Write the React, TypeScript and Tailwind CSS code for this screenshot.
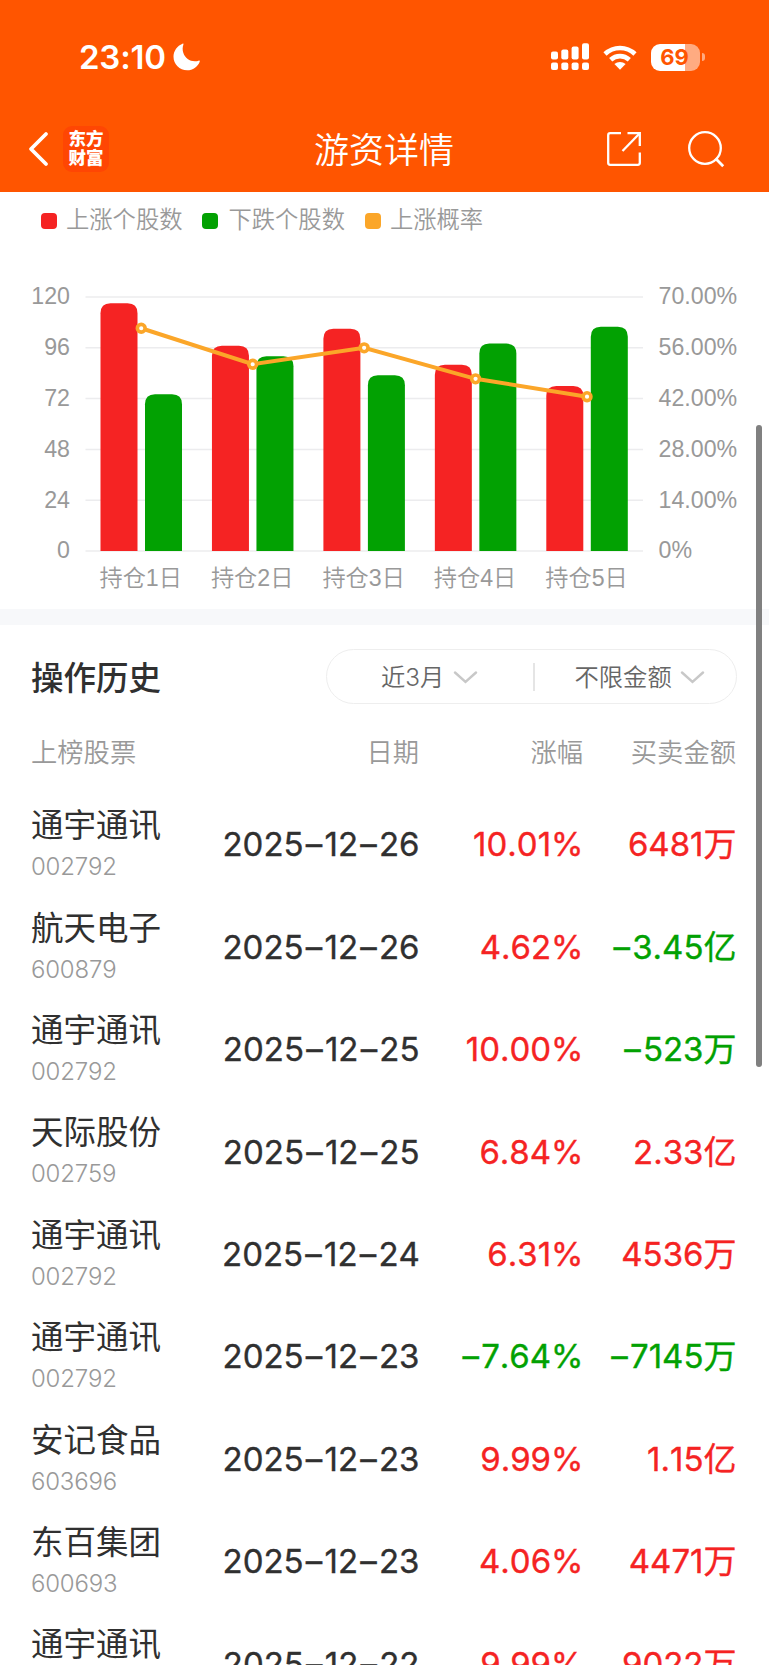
import React from 'react';

interface DayStat {
    label: string;
    up: number;
    down: number;
}

interface TradeRecord {
    name: string;
    code: string;
    date: string;
    change: string;
    amount: string;
}

const stats: DayStat[] = [
    { label: '持仓1日', up: 117, down: 74 },
    { label: '持仓2日', up: 97, down: 92 },
    { label: '持仓3日', up: 105, down: 83 },
    { label: '持仓4日', up: 88, down: 98 },
    { label: '持仓5日', up: 78, down: 106 },
];

const records: TradeRecord[] = [
    { name: '通宇通讯', code: '002792', date: '2025–12–26', change: '10.01%', amount: '6481万' },
    { name: '航天电子', code: '600879', date: '2025–12–26', change: '4.62%', amount: '–3.45亿' },
    { name: '通宇通讯', code: '002792', date: '2025–12–25', change: '10.00%', amount: '–523万' },
    { name: '天际股份', code: '002759', date: '2025–12–25', change: '6.84%', amount: '2.33亿' },
    { name: '通宇通讯', code: '002792', date: '2025–12–24', change: '6.31%', amount: '4536万' },
    { name: '通宇通讯', code: '002792', date: '2025–12–23', change: '–7.64%', amount: '–7145万' },
    { name: '安记食品', code: '603696', date: '2025–12–23', change: '9.99%', amount: '1.15亿' },
    { name: '东百集团', code: '600693', date: '2025–12–23', change: '4.06%', amount: '4471万' },
    { name: '通宇通讯', code: '002792', date: '2025–12–22', change: '9.99%', amount: '9022万' },
];

const valueColor = (value: string) => (value.startsWith('–') ? 'text-[#02a102]' : 'text-[#f52323]');

const StatusBar: React.FC = () => (
    <div className="flex h-[108px] items-start justify-between pl-[79px] pr-[64px] pt-[37px] text-white">
        <div className="flex items-center gap-[7px]">
            <span className="text-[33px] font-semibold leading-[40px] tracking-[-0.2px]">23:10</span>
            <svg className="h-[28px] w-[27px]" viewBox="0 0 27 28" fill="currentColor">
                <path d="M9.500.7C10.200.4 10.700.8 10.400 1.500C9.500 4 9.400 7 10.300 9.800C12 15.300 16.800 18.400 22 18.300C23.300 18.300 24.500 18.100 25.600 17.700C26.400 17.400 27 18 26.700 18.700C24.600 24 19.800 27.300 14.200 27.300C6.600 27.300.5 21.300.5 13.800C.5 7.900 4.300 2.800 9.500.7Z" />
            </svg>
        </div>
        <div className="flex h-[40px] items-center">
            <svg className="h-[28px] w-[38px]" viewBox="0 0 38 28" fill="currentColor">
                <rect x="0" y="8.500" width="7" height="8" rx="2" />
                <rect x="10.300" y="6.500" width="7" height="10" rx="2" />
                <rect x="20.600" y="3.500" width="7" height="13" rx="2" />
                <rect x="31" y="0.300" width="7" height="16.200" rx="2" />
                <rect x="0" y="19.500" width="7" height="7.500" rx="2" />
                <rect x="10.300" y="19.500" width="7" height="7.500" rx="2" />
                <rect x="20.600" y="19.500" width="7" height="7.500" rx="2" />
                <rect x="31" y="19.500" width="7" height="7.500" rx="2" />
            </svg>
            <svg className="ml-[14px] h-[25px] w-[34px]" viewBox="0 0 34 25" fill="none" stroke="currentColor">
                <path strokeWidth="4.600" d="M2 9C10.500.9 23.500.9 32 9" />
                <path strokeWidth="4.600" d="M7.700 14.800C13 9.900 21 9.900 26.300 14.800" />
                <path fill="currentColor" stroke="none" d="M11.400 19C14.600 16.200 19.400 16.200 22.600 19L17 24.800Z" />
            </svg>
            <div className="ml-[14px] flex h-[27px] w-[49px] items-center justify-center rounded-[9px] bg-[linear-gradient(90deg,#fff_70%,#ffab81_70%)] pr-[2px]">
                <span className="text-[22px] font-bold leading-none text-[#ff5500]">69</span>
            </div>
            <div className="ml-[2px] h-[8px] w-[3px] rounded-r-full bg-[#ffab81]" />
        </div>
    </div>
);

const NavBar: React.FC = () => (
    <div className="grid h-[84px] grid-cols-[1fr_auto_1fr] items-center pb-[3px] text-white">
        <div className="flex items-center pl-[28px]">
            <svg className="h-[36px] w-[21px]" viewBox="0 0 21 36" fill="none" stroke="currentColor">
                <path strokeLinecap="round" strokeLinejoin="round" strokeWidth={3.8} d="M18 3L3 18L18 33" />
            </svg>
            <div className="ml-[14px] flex h-[46px] w-[46px] flex-col items-center justify-center rounded-[9px] bg-[#ff4603] pb-[2px]">
                <span className="text-[17.5px] font-black leading-[19px]">东方</span>
                <span className="text-[17.5px] font-black leading-[19px]">财富</span>
            </div>
        </div>
        <h1 className="pr-px pt-[3px] text-[35px] font-[350] leading-none">游资详情</h1>
        <div className="flex items-center justify-end pr-[44px]">
            <svg className="h-[36px] w-[36px]" viewBox="0 0 36 36" fill="none" stroke="currentColor" strokeWidth={2.3}>
                <path d="M15 2.200H4.200Q2.200 2.200 2.200 4.200V31.800Q2.200 33.800 4.200 33.800H31.800Q33.800 33.800 33.800 31.800V21.500" />
                <path d="M21.500 2.200H33.800V15" />
                <path d="M33.500 2.500L16.500 20" />
            </svg>
            <svg className="ml-[45px] h-[38px] w-[38px]" viewBox="0 0 38 38" fill="none" stroke="currentColor" strokeWidth={2.3}>
                <circle cx="18" cy="18" r="15.800" />
                <path strokeWidth={2.8} d="M28.600 28.600L36.200 36.200" />
            </svg>
        </div>
    </div>
);

const Legend: React.FC = () => (
    <div className="flex h-[56px] items-center pl-[41px] pt-px text-[23.3px] font-[350] text-[#999]">
        <span className="mr-[9px] h-4 w-4 rounded-[4px] bg-[#f52323]" />
        上涨个股数
        <span className="ml-5 mr-[10px] h-4 w-4 rounded-[4px] bg-[#02a102]" />
        下跌个股数
        <span className="ml-5 mr-[9px] h-4 w-4 rounded-[4px] bg-[#fba629]" />
        上涨概率
    </div>
);

const HoldingChart: React.FC = () => {
    const left = 85.5;
    const step = 111.45;
    const bottom = 303;
    const yOf = (value: number) => bottom - (value / 120) * 254;
    const bar = (x: number, value: number) => {
        const y = yOf(value);
        return `M${x} ${bottom}V${y + 10}Q${x} ${y} ${x + 10} ${y}H${x + 27}Q${x + 37} ${y} ${x + 37} ${y + 10}V${bottom}Z`;
    };
    const points = stats.map((s, i) => ({
        x: left + step * (i + 0.5),
        y: bottom - 0.5 - (s.up / (s.up + s.down) / 0.7) * 254,
    }));

    return (
        <svg className="block h-[361px] w-[769px] font-['Liberation_Sans','Noto_Sans_CJK_SC',sans-serif] text-[23.2px]" viewBox="0 0 769 361">
            {[0, 1, 2, 3, 4, 5].map((i) => {
                const y = bottom - i * 50.8;
                return (
                    <g key={i}>
                        <line x1={left} x2="643" y1={y} y2={y} stroke="#ececee" strokeWidth="1.500" />
                        <text x="70" y={y + 7.4} textAnchor="end" fill="#999">{i * 24}</text>
                        <text x="658.500" y={y + 7.4} fill="#999">{i === 0 ? '0%' : `${i * 14}.00%`}</text>
                    </g>
                );
            })}
            {stats.map((s, i) => {
                const x = left + step * i;
                return (
                    <g key={s.label}>
                        <path d={bar(x + 15, s.up)} fill="#f52323" />
                        <path d={bar(x + 59.5, s.down)} fill="#02a102" />
                        <text x={x + 14} y="338" fill="#999" className="font-[350]">{s.label}</text>
                    </g>
                );
            })}
            <polyline points={points.map((p) => `${p.x},${p.y}`).join(' ')} fill="none" stroke="#fba629" strokeWidth="4" />
            {points.map((p) => (
                <circle key={p.x} cx={p.x} cy={p.y} r="3.900" fill="#fff" stroke="#fba629" strokeWidth="3.600" />
            ))}
        </svg>
    );
};

const ChevronDown: React.FC = () => (
    <svg className="h-[13px] w-[25px]" viewBox="0 0 25 13" fill="none" stroke="#c8c8c8">
        <path strokeLinecap="round" strokeWidth={2.4} d="M2 1.500L12.500 11L23 1.500" />
    </svg>
);

const HistoryHeader: React.FC = () => (
    <div className="flex h-[103px] items-center justify-between pl-[31px] pr-8">
        <h2 className="pt-[5px] text-[32.5px] font-medium text-[#303030]">操作历史</h2>
        <div className="flex h-[55px] w-[411px] items-center rounded-full border border-[#eee] text-[24.3px] text-[#666]">
            <button className="flex w-[206px] items-center gap-[9px] pl-[54px] pt-0.5 font-[350]">
                近3月
                <ChevronDown />
            </button>
            <span className="h-[28px] w-[1.5px] bg-[#e5e5e5]" />
            <button className="flex items-center gap-[8px] pl-[40px] pt-0.5 font-[350]">
                不限金额
                <ChevronDown />
            </button>
        </div>
    </div>
);

// Gives every dash a little room on both sides
const Figure: React.FC<{ value: string }> = ({ value }) => (
    <>
        {value.split('–').map((part, i) => (
            <React.Fragment key={i}>
                {i > 0 && <span className="mx-[2.2px]">–</span>}
                {part}
            </React.Fragment>
        ))}
    </>
);

const HistoryTable: React.FC = () => (
    <div className="px-8">
        <div className="grid h-[66px] grid-cols-[190px_197px_164px_153px] items-start pt-[6px] text-right text-[26.3px] font-[350] leading-[38px] text-[#999]">
            <span className="-ml-px text-left">上榜股票</span>
            <span>日期</span>
            <span>涨幅</span>
            <span>买卖金额</span>
        </div>
        {records.map((r, i) => (
            <div key={i} className="grid h-[102.4px] grid-cols-[190px_197.500px_164px_153px] items-center text-right text-[33px] [font-kerning:none]">
                <div className="text-left">
                    <div className="-ml-px text-[32.5px] leading-[44px] text-[#303030]">{r.name}</div>
                    <div className="-ml-px text-[24px] font-[350] leading-[38px] tracking-[-0.2px] text-[#999]">{r.code}</div>
                </div>
                <span className="whitespace-nowrap text-[#303030] [-webkit-text-stroke:0.35px]"><Figure value={r.date} /></span>
                <span className={`whitespace-nowrap [-webkit-text-stroke:0.35px] ${valueColor(r.change)}`}><Figure value={r.change} /></span>
                <span className={`whitespace-nowrap [-webkit-text-stroke:0.35px] ${valueColor(r.amount)}`}><Figure value={r.amount} /></span>
            </div>
        ))}
    </div>
);

const App: React.FC = () => (
    <div className="relative h-[1665px] w-[769px] overflow-hidden bg-white font-['Inter','Noto_Sans_CJK_SC',sans-serif]">
        <header className="bg-[#ff5500]">
            <StatusBar />
            <NavBar />
        </header>
        <Legend />
        <HoldingChart />
        <div className="h-4 bg-[#f7f8fa]" />
        <HistoryHeader />
        <HistoryTable />
        {/* Scroll indicator */}
        <div className="absolute left-[756px] top-[425px] h-[642px] w-[6px] rounded-full bg-[#808080]" />
    </div>
);

export default App;
